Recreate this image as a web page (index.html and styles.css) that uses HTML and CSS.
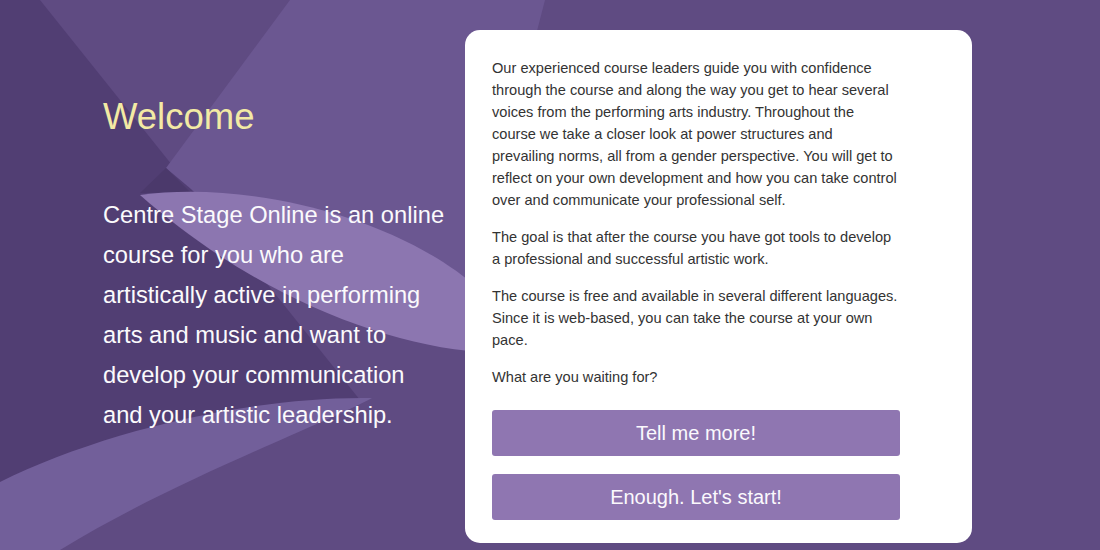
FILE: index.html
```html
<!DOCTYPE html>
<html>
<head>
<title>Centre Stage Online</title>
<meta name=viewport content="width=device-width, initial-scale=1">
<link rel="stylesheet" href="styles.css">
</head>
<body>
<svg class="backdrop" viewBox="0 0 1100 550" preserveAspectRatio="none" aria-hidden="true">
	<rect width="1100" height="550" fill="#5f4b82"/>
	<polygon points="0,0 40,0 360,400 0,560" fill="#513e73"/>
	<polygon points="290,0 545,0 470,290 210,205 166,168" fill="#6b5791"/>
	<polygon points="166,168 190,192 140,193" fill="#4b396b"/>
	<path d="M140,195 C250,180 400,218 480,290 L480,352 C380,345 250,292 140,195 Z" fill="#8c76b0"/>
	<path d="M0,482 C100,432 250,396 372,398 C320,426 170,482 60,550 L0,550 Z" fill="#725f9a"/>
</svg>
<div class="page">
	<div class="intro">
		<h1 class="welcome">Welcome</h1>
		<p class="lead">Centre Stage Online is an online course for you who are artistically active in performing arts and music and want to develop your communication and your artistic leadership.</p>
	</div>
	<div class="card">
		<p>Our experienced course leaders guide you with confidence through the course and along the way you get to hear several voices from the performing arts industry. Throughout the course we take a closer look at power structures and prevailing norms, all from a gender perspective. You will get to reflect on your own development and how you can take control over and communicate your professional self.</p>
		<p>The goal is that after the course you have got tools to develop a professional and successful artistic work.</p>
		<p>The course is free and available in several different languages. Since it is web-based, you can take the course at your own pace.</p>
		<p>What are you waiting for?</p>
		<div class="actions">
			<button class="sbutton">Tell me more!</button>
			<button class="sbutton">Enough. Let's start!</button>
		</div>
	</div>
</div>
</body>
</html>
```
FILE: styles.css
```css
body {
    margin: 0;
    background-color: #5f4b82;
    font-family: "Liberation Sans", Arial, sans-serif;
    overflow: hidden;
}
.backdrop {
    position: absolute;
    left: 0;
    top: 0;
    width: 1100px;
    height: 550px;
    z-index: 0;
}
.page {
    position: relative;
    z-index: 1;
    display: flex;
    gap: 18px;
    padding: 30px 0 0 103px;
}
.intro {
    width: 344px;
    padding-top: 66px;
}
.welcome {
    margin: 0;
    font-size: 36.5px;
    line-height: 42px;
    font-weight: normal;
    color: #f3eaa4;
}
.lead {
    margin: 57px 0 0 0;
    font-size: 23.7px;
    line-height: 40px;
    color: #fbfafc;
}
.card {
    width: 408px;
    padding: 27px 72px 23px 27px;
    background-color: white;
    border-radius: 15px;
    color: #333;
    font-size: 14.6px;
    line-height: 22px;
}
.card p {
    max-width: 406px;
    margin: 0 0 15px 0;
}
.actions {
    display: flex;
    flex-direction: column;
    gap: 18px;
    margin-top: 22px;
}
.sbutton {
    height: 46px;
    background-color: #8f76b1;
    border: none;
    border-radius: 3px;
    color: #fbf9fd;
    font-family: "Liberation Sans", Arial, sans-serif;
    font-size: 20px;
    text-align: center;
    cursor: pointer;
}
```
